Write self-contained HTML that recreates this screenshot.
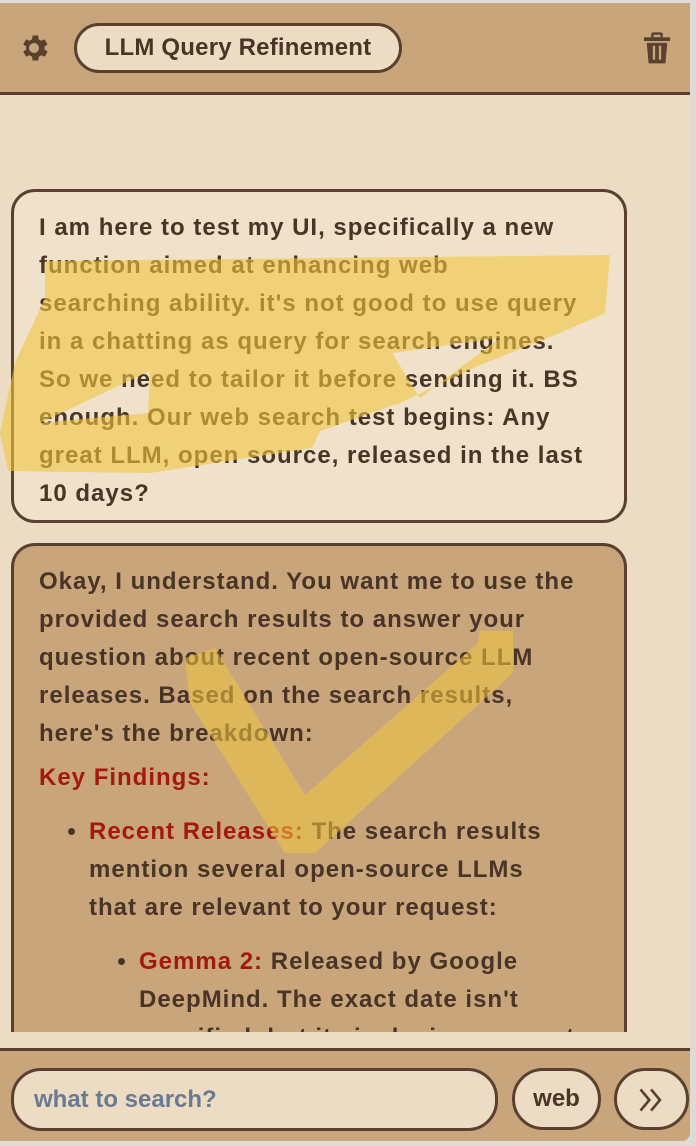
<!DOCTYPE html>
<html><head><style>
*{margin:0;padding:0;box-sizing:border-box}
body{width:696px;height:1146px;background:#dedad4;font-family:"Liberation Sans",sans-serif;color:#4a3426;position:relative;overflow:hidden}
.app{position:absolute;left:0;top:3px;width:690px;height:1138px;background:#ecdcc4;border-bottom-right-radius:8px;overflow:hidden}
.hdr{position:absolute;left:0;top:0;width:690px;height:92px;background:#c9a57c;border-bottom:3px solid #5a4030}
.title{position:absolute;left:74px;top:20px;width:328px;height:50px;border:3px solid #5a4030;border-radius:25px;background:#ecdcc4;font-weight:bold;font-size:24px;line-height:44px;text-align:center;letter-spacing:0.2px}
.clip{position:absolute;left:0;top:92px;width:690px;height:937px;overflow:hidden}
.bub{position:absolute;left:11px;width:616px;border:3px solid #5a4030;border-radius:24px;padding:17px 25px;font-weight:bold;font-size:24px;line-height:38px;letter-spacing:1px;white-space:nowrap}
.u{top:94px;height:334px;background:#efe1ca}
.a{top:448px;height:560px;background:#c9a57c}
.red{color:#a5180f}
ul{list-style:disc;padding-left:50px}
ul ul{padding-left:50px}
.ftr{position:absolute;left:0;top:1045px;width:690px;height:100px;background:#c9a57c;border-top:3px solid #5a4030}
.inp{position:absolute;left:11px;top:17px;width:487px;height:63px;border:3px solid #5a4030;border-radius:30px;background:#ecdcc4;color:#6a7a90;font-weight:bold;font-size:24px;line-height:57px;padding-left:20px}
.web{position:absolute;left:512px;top:17px;width:89px;height:62px;border:3px solid #5a4030;border-radius:31px;background:#ecdcc4;font-weight:bold;font-size:24px;line-height:56px;text-align:center}
.go{position:absolute;left:614px;top:17px;width:75px;height:62px;border:3px solid #5a4030;border-radius:31px;background:#ecdcc4}
</style></head><body>
<div class="app">
<div class="clip">
<div class="bub u">I am here to test my UI, specifically a new<br>function aimed at enhancing web<br>searching ability. it's not good to use query<br>in a chatting as query for search engines.<br>So we need to tailor it before sending it. BS<br>enough. Our web search test begins: Any<br>great LLM, open source, released in the last<br>10 days?</div>
<div class="bub a">Okay, I understand. You want me to use the<br>provided search results to answer your<br>question about recent open-source LLM<br>releases. Based on the search results,<br>here's the breakdown:
<div class="red" style="margin-top:6px">Key Findings:</div>
<ul style="margin-top:16px"><li><span class="red">Recent Releases:</span> The search results<br>mention several open-source LLMs<br>that are relevant to your request:
<ul style="margin-top:16px"><li><span class="red">Gemma 2:</span> Released by Google<br>DeepMind. The exact date isn't<br>specified, but its inclusion suggests</li></ul></li></ul>
</div>
<svg style="position:absolute;left:0;top:-92px" width="690" height="1045">
<path fill-rule="evenodd" fill="#f0c640" fill-opacity="0.6" d="M45 258 L610 252 L605 310 L560 330 L480 362 L400 400 L320 428 L312 445 L150 470 L8 468 L0 430 L15 360 L45 295 Z M40 420 L150 368 L148 410 Z M392 350 L500 335 L420 395 Z"/>
<path fill="#f0c640" fill-opacity="0.55" d="M185 655 L215 645 L305 792 L478 640 L480 628 L513 628 L513 670 L315 850 L285 850 L190 700 Z"/>
</svg>
</div>
<div class="hdr">
<svg style="position:absolute;left:17px;top:28px" width="34" height="34" viewBox="0 0 24 24"><path fill="#5a4030" d="M19.4 13a7.5 7.5 0 000-2l2.1-1.6-2-3.5-2.5 1a7 7 0 00-1.7-1L15 3.2h-4l-.4 2.7a7 7 0 00-1.7 1l-2.5-1-2 3.5L6.5 11a7.5 7.5 0 000 2l-2.1 1.6 2 3.5 2.5-1a7 7 0 001.7 1l.4 2.7h4l.4-2.7a7 7 0 001.7-1l2.5 1 2-3.5zM12 15.5a3.5 3.5 0 110-7 3.5 3.5 0 010 7z"/></svg>
<div class="title">LLM Query Refinement</div>
<svg style="position:absolute;left:643px;top:29px" width="28" height="33" viewBox="0 0 30 34"><rect x="1" y="5" width="28" height="4" fill="#5a4030"/><rect x="10" y="1" width="10" height="5" rx="1" fill="none" stroke="#5a4030" stroke-width="2.5"/><path d="M4 11h22l-2 22H6z" fill="#5a4030"/><rect x="10.5" y="14" width="2.5" height="15" fill="#c9a57c"/><rect x="17" y="14" width="2.5" height="15" fill="#c9a57c"/></svg>
</div>
<div class="ftr">
<div class="inp">what to search?</div>
<div class="web">web</div>
<div class="go"><svg style="position:absolute;left:20px;top:15px" width="30" height="28" viewBox="0 0 34 30"><path d="M4 3l10 12-10 12M16 3l10 12-10 12" fill="none" stroke="#5a4030" stroke-width="3"/></svg></div>
</div>
</div>
</body></html>
